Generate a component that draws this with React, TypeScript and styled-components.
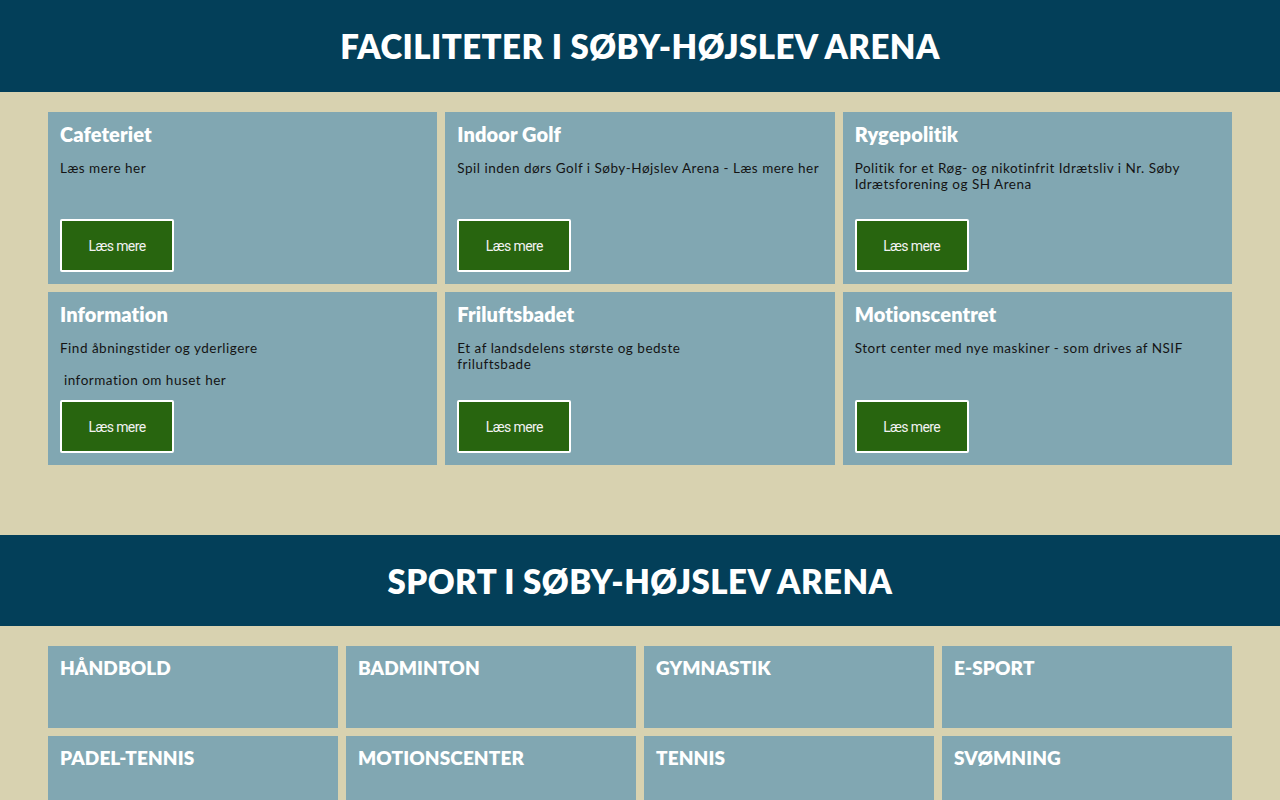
import React from "react";
import styled, { createGlobalStyle } from "styled-components";

const Global = createGlobalStyle`
  html, body { margin: 0; padding: 0; background: #d8d2b0; }
  * { box-sizing: border-box; }
`;

const Page = styled.div`
  width: 1280px;
  background: #d8d2b0;
`;

const Banner = styled.header<{ $h: number }>`
  height: ${(p) => p.$h}px;
  background: #033f59;
  display: flex;
  align-items: center;
  justify-content: center;
`;

const BannerTitle = styled.h1`
  margin: 0;
  color: #ffffff;
  font-family: "Lato", "Noto Sans", sans-serif;
  font-weight: 800;
  font-size: 33px;
  letter-spacing: 0.45px;
  text-transform: uppercase;
`;

const Section = styled.section<{ $bottom: number }>`
  padding: 20px 48px ${(p) => p.$bottom}px;
`;

const Grid = styled.div<{ $cols: number }>`
  display: grid;
  grid-template-columns: repeat(${(p) => p.$cols}, 1fr);
  gap: 8px;
`;

const Card = styled.div<{ $h: number }>`
  height: ${(p) => p.$h}px;
  background: #81a7b2;
  padding: 12px;
  display: flex;
  flex-direction: column;
`;

const CardTitle = styled.h3`
  margin: 0;
  color: #ffffff;
  font-family: "Lato", "Noto Sans", sans-serif;
  font-weight: 800;
  font-size: 20px;
  line-height: 20px;
  letter-spacing: 0.1px;
`;

const Desc = styled.div`
  margin-top: 16px;
  color: #141414;
  font-family: "Lato", "Noto Sans", sans-serif;
  font-size: 13.5px;
  line-height: 16px;
  letter-spacing: 0.5px;
  p { margin: 0 0 16px; }
  p:last-child { margin-bottom: 0; }
`;

const Button = styled.a`
  margin-top: auto;
  width: 114px;
  height: 53px;
  display: flex;
  align-items: center;
  justify-content: center;
  background: #28650f;
  border: 2px solid #ffffff;
  border-radius: 2px;
  color: #f2f2f2;
  font-family: "Roboto", "Liberation Sans", sans-serif;
  font-weight: 400;
  font-size: 14px;
  letter-spacing: -0.6px;
  text-decoration: none;
  cursor: pointer;
`;

const SportTitle = styled(CardTitle)`
  text-transform: uppercase;
  font-size: 19px;
`;

type Facility = { title: string; paras: React.ReactNode[] };

const facilities: Facility[] = [
  { title: "Cafeteriet", paras: ["Læs mere her"] },
  { title: "Indoor Golf", paras: ["Spil inden dørs Golf i Søby-Højslev Arena - Læs mere her"] },
  {
    title: "Rygepolitik",
    paras: [
      <>
        Politik for et Røg- og nikotinfrit Idrætsliv i Nr. Søby
        <br />
        Idrætsforening og SH Arena
      </>,
    ],
  },
  { title: "Information", paras: ["Find åbningstider og yderligere", "\u00a0information om huset her"] },
  {
    title: "Friluftsbadet",
    paras: [
      <>
        Et af landsdelens største og bedste
        <br />
        friluftsbade
      </>,
    ],
  },
  { title: "Motionscentret", paras: ["Stort center med nye maskiner - som drives af NSIF"] },
];

const sports = [
  "Håndbold",
  "Badminton",
  "Gymnastik",
  "E-sport",
  "Padel-tennis",
  "Motionscenter",
  "Tennis",
  "Svømning",
];

export default function App() {
  return (
    <Page>
      <Global />
      <Banner $h={92}>
        <BannerTitle>Faciliteter i Søby-Højslev Arena</BannerTitle>
      </Banner>
      <Section $bottom={70}>
        <Grid $cols={3}>
          {facilities.map((f, i) => (
            <Card key={f.title} $h={i < 3 ? 172 : 173}>
              <CardTitle>{f.title}</CardTitle>
              <Desc>
                {f.paras.map((p, j) => (
                  <p key={j}>{p}</p>
                ))}
              </Desc>
              <Button>Læs mere</Button>
            </Card>
          ))}
        </Grid>
      </Section>
      <Banner $h={91}>
        <BannerTitle>Sport i Søby-Højslev Arena</BannerTitle>
      </Banner>
      <Section $bottom={20}>
        <Grid $cols={4}>
          {sports.map((s) => (
            <Card key={s} $h={82}>
              <SportTitle>{s}</SportTitle>
            </Card>
          ))}
        </Grid>
      </Section>
    </Page>
  );
}
